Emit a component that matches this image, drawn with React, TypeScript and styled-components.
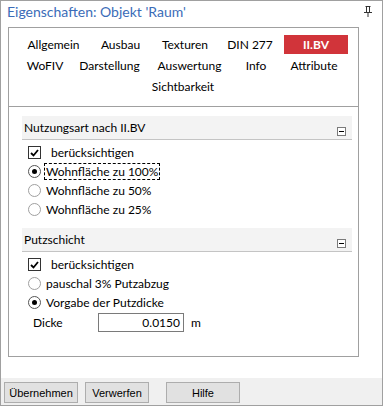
import { ReactElement } from 'react';
import styled, { createGlobalStyle } from 'styled-components';

const GlobalStyle = createGlobalStyle`
  html, body {
    margin: 0;
    padding: 0;
    background: #ffffff;
  }
  body {
    font-family: Lato, 'Noto Sans', sans-serif;
    font-size: 12px;
    color: #000000;
  }
`;

const Window = styled.div`
  box-sizing: border-box;
  width: 383px;
  height: 406px;
  border: 1px solid #a0a0a0;
  display: flex;
  flex-direction: column;
  background: #ffffff;
`;

const TitleBar = styled.div`
  height: 26px;
  display: flex;
  align-items: center;
  justify-content: space-between;
  padding: 0 10px 0 6px;
`;

const Title = styled.div`
  color: #3a6cb8;
  font-size: 14px;
  line-height: 1;
  margin-top: -4px;
`;

const Pin = styled.svg`
  width: 8px;
  height: 11px;
  margin-top: -6px;
`;

const Panel = styled.div`
  box-sizing: border-box;
  width: 351px;
  height: 330px;
  margin-left: 7px;
  border: 1px solid #a0a0a0;
  display: flex;
  flex-direction: column;
`;

const TabArea = styled.div`
  height: 79px;
  padding: 6px 0 0 11px;
  box-sizing: border-box;
  border-bottom: 1px solid #a0a0a0;
`;

const TabRow = styled.div`
  display: flex;
  height: 21px;
`;

const Tab = styled.div<{ $w: number; $active?: boolean }>`
  width: ${({ $w }) => $w}px;
  height: 19px;
  margin-top: 1px;
  display: flex;
  align-items: center;
  justify-content: center;
  white-space: nowrap;
  background: ${({ $active }) => ($active ? '#d1343a' : 'transparent')};
  color: ${({ $active }) => ($active ? '#ffffff' : '#000000')};
  font-weight: ${({ $active }) => ($active ? 700 : 400)};
`;

const Content = styled.div`
  padding: 9px 6px 0 13px;
`;

const Section = styled.div`
  margin-bottom: 9px;
`;

const SectionHeader = styled.div`
  height: 23px;
  background: #f3f3f3;
  border-bottom: 1px solid #c4c4c4;
  display: flex;
  align-items: center;
  justify-content: space-between;
  padding: 0 6px 0 2px;
`;

const Collapse = styled.div`
  box-sizing: border-box;
  width: 9px;
  height: 9px;
  border: 1px solid #7a7a7a;
  background: #ffffff;
  margin-top: 8px;
  display: flex;
  align-items: center;
  justify-content: center;

  &::after {
    content: '';
    width: 5px;
    height: 1px;
    background: #000000;
  }
`;

const Items = styled.div`
  padding: 3px 0 0 6px;
`;

const Row = styled.div`
  height: 19px;
  display: flex;
  align-items: center;
  white-space: nowrap;
`;

const CheckBox = styled.div`
  box-sizing: border-box;
  width: 13px;
  height: 13px;
  border: 1px solid #333333;
  background: #ffffff;
  margin-right: 10px;
  display: flex;
  align-items: center;
  justify-content: center;
`;

const Radio = styled.div<{ $on?: boolean }>`
  box-sizing: border-box;
  width: 13px;
  height: 13px;
  border-radius: 50%;
  border: 1px solid ${({ $on }) => ($on ? '#555555' : '#a0a0a0')};
  background: #ffffff;
  margin-right: 5px;
  display: flex;
  align-items: center;
  justify-content: center;

  &::after {
    content: '';
    display: ${({ $on }) => ($on ? 'block' : 'none')};
    width: 5px;
    height: 5px;
    border-radius: 50%;
    background: #000000;
  }
`;

const Focus = styled.span`
  outline: 1px dashed #000000;
  outline-offset: 0;
  padding: 0 1px;
  margin-left: -1px;
  line-height: 15px;
`;

const FieldRow = styled(Row)`
  height: 20px;
  padding-left: 5px;
`;

const FieldLabel = styled.div`
  width: 65px;
`;

const Input = styled.div`
  box-sizing: border-box;
  width: 86px;
  height: 19px;
  border: 1px solid #7a7a7a;
  text-align: right;
  padding-right: 3px;
  line-height: 17px;
  margin-right: 7px;
`;

const Spacer = styled.div`
  flex: 1;
`;

const Footer = styled.div`
  height: 27px;
  background: #f0f0f0;
  display: flex;
  align-items: flex-start;
  padding: 4px 0 0 3px;
  box-sizing: border-box;
  margin-top: 21px;
`;

const Button = styled.div<{ $w: number; $ml: number }>`
  box-sizing: border-box;
  width: ${({ $w }) => $w}px;
  height: 21px;
  margin-left: ${({ $ml }) => $ml}px;
  background: #e1e1e1;
  border: 1px solid #adadad;
  display: flex;
  align-items: center;
  justify-content: center;
  font-family: 'Liberation Sans', Arial, sans-serif;
  font-size: 11px;
`;

const Check = (): ReactElement => (
  <svg width="9" height="8" viewBox="0 0 9 8">
    <path d="M1 4 L3.5 6.5 L8 1" fill="none" stroke="#000" strokeWidth="1.8" />
  </svg>
);

const row1: [string, number][] = [
  ['Allgemein', 67],
  ['Ausbau', 67],
  ['Texturen', 62],
  ['DIN 277', 68],
];

const row2: [string, number][] = [
  ['WoFIV', 50],
  ['Darstellung', 79],
  ['Auswertung', 81],
  ['Info', 52],
  ['Attribute', 64],
];

const App = (): ReactElement => {
  return (
    <>
      <GlobalStyle />
      <Window>
        <TitleBar>
          <Title>Eigenschaften: Objekt 'Raum'</Title>
          <Pin viewBox="0 0 8 11">
            <path d="M2.5 0.5 V6.5 M5.5 0.5 V6.5 M1.5 0.5 H6.5 M0 6.5 H8 M4 6.5 V11" stroke="#333" strokeWidth="1" fill="none" />
          </Pin>
        </TitleBar>
        <Panel>
          <TabArea>
            <TabRow>
              {row1.map(([t, w]) => (
                <Tab key={t} $w={w}>{t}</Tab>
              ))}
              <Tab $w={64} $active>II.BV</Tab>
            </TabRow>
            <TabRow>
              {row2.map(([t, w]) => (
                <Tab key={t} $w={w}>{t}</Tab>
              ))}
            </TabRow>
            <TabRow>
              <Tab $w={326}>Sichtbarkeit</Tab>
            </TabRow>
          </TabArea>
          <Content>
            <Section>
              <SectionHeader>
                <span>Nutzungsart nach II.BV</span>
                <Collapse />
              </SectionHeader>
              <Items>
                <Row>
                  <CheckBox><Check /></CheckBox>
                  berücksichtigen
                </Row>
                <Row>
                  <Radio $on />
                  <Focus>Wohnfläche zu 100%</Focus>
                </Row>
                <Row>
                  <Radio />
                  Wohnfläche zu 50%
                </Row>
                <Row>
                  <Radio />
                  Wohnfläche zu 25%
                </Row>
              </Items>
            </Section>
            <Section>
              <SectionHeader>
                <span>Putzschicht</span>
                <Collapse />
              </SectionHeader>
              <Items>
                <Row>
                  <CheckBox><Check /></CheckBox>
                  berücksichtigen
                </Row>
                <Row>
                  <Radio />
                  pauschal 3% Putzabzug
                </Row>
                <Row>
                  <Radio $on />
                  Vorgabe der Putzdicke
                </Row>
                <FieldRow>
                  <FieldLabel>Dicke</FieldLabel>
                  <Input>0.0150</Input>
                  m
                </FieldRow>
              </Items>
            </Section>
          </Content>
          <Spacer />
        </Panel>
        <Footer>
          <Button $w={74} $ml={0}>Übernehmen</Button>
          <Button $w={64} $ml={7}>Verwerfen</Button>
          <Button $w={74} $ml={17}>Hilfe</Button>
        </Footer>
      </Window>
    </>
  );
};

export default App;
